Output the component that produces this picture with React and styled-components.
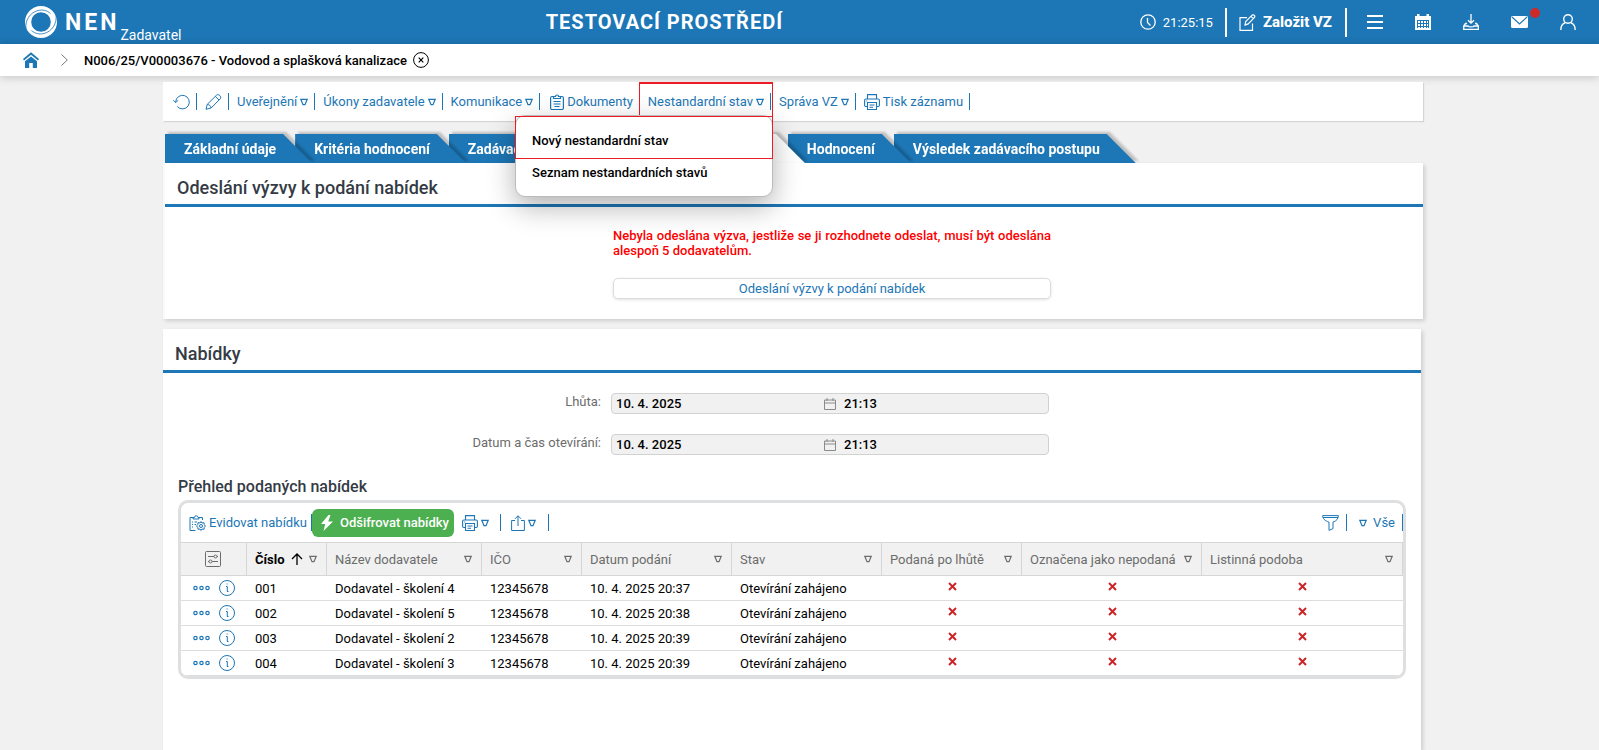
import React from 'react';
import styled, { createGlobalStyle } from 'styled-components';

const GlobalStyle = createGlobalStyle`
  * {
    box-sizing: border-box;
  }

  body {
    margin: 0;
    background: #f1f1f1;
    color: #000;
    font-family: Roboto, "Liberation Sans", sans-serif;
    font-size: 13px;
    line-height: 15px;
  }

  button, input {
    font: inherit;
    color: inherit;
    padding: 0;
    border: 0;
    background: none;
  }

  button {
    cursor: pointer;
  }

  a {
    color: inherit;
    text-decoration: none;
  }

  svg {
    display: block;
    flex: none;
  }
`;

const blue = '#1d76b5';

const Page = styled.div`
  display: flex;
  flex-direction: column;
  min-height: 100vh;
`;

const TopBar = styled.header`
  display: grid;
  grid-template-columns: 25fr auto 38fr;
  align-items: center;
  height: 44px;
  padding: 0 23px 0 24px;
  background: ${blue};
  color: #fff;
`;

const Brand = styled.a`
  display: flex;
  align-items: center;
`;

const BrandName = styled.span`
  margin: 0 1px 0 7px;
  font-size: 23px;
  font-weight: 700;
  letter-spacing: 3px;
`;

const BrandRole = styled.span`
  align-self: flex-end;
  padding-top: 26px;
  font-size: 14px;
`;

const EnvTitle = styled.div`
  font-size: 20px;
  font-weight: 700;
  letter-spacing: 1px;
`;

const TopActions = styled.nav`
  display: flex;
  align-items: center;
  justify-content: flex-end;
`;

const Clock = styled.span`
  display: flex;
  align-items: center;
  gap: 7px;
  padding-right: 12px;
`;

const CreateButton = styled.button`
  display: flex;
  align-items: center;
  gap: 7px;
  height: 29px;
  padding: 0 13px 0 12px;
  border: solid #fff;
  border-width: 0 2px;
  font-size: 15px;
  font-weight: 800;
`;

const IconButton = styled.button`
  position: relative;
  display: flex;
  color: ${(props) => props.$color || 'inherit'};
`;

const TopIcons = styled.div`
  display: flex;
  gap: 32px;
  padding-left: 20px;
`;

const Badge = styled.span`
  position: absolute;
  top: -6px;
  right: -12px;
  width: 10px;
  height: 10px;
  border-radius: 50%;
  background: #cf2a2a;
`;

const Crumbs = styled.nav`
  position: relative;
  display: flex;
  align-items: center;
  height: 32px;
  padding: 0 23px;
  background: #fff;
  box-shadow: 0 1px 10px rgba(0, 0, 0, 0.2);
  font-weight: 500;
`;

const CrumbArrow = styled.span`
  padding: 0 16px 0 22px;
  color: #777;
`;

const CrumbText = styled.a`
  margin-right: 6px;
`;

const Main = styled.main`
  display: flex;
  flex: 1;
  flex-direction: column;
  width: 100%;
  max-width: 1273px;
  margin: 0 auto;
  padding: 6px 13px 0 0;
`;

const Toolbar = styled.div`
  position: relative;
  display: flex;
  align-items: center;
  height: 39px;
  padding-left: 8px;
  background: #fff;
  box-shadow: 1px 1px 1px #d4d4d4;
  color: ${blue};
`;

const ToolItem = styled.div`
  position: relative;
  display: flex;
  align-items: center;
  height: 17px;
  padding: 0 ${(props) => props.$right || 6}px 0 ${(props) => (props.$left === undefined ? 8 : props.$left)}px;
  border-right: 1px solid ${blue};
`;

const ToolButton = styled.button`
  display: flex;
  align-items: center;
  gap: 3px;
  white-space: nowrap;
`;

/* red frame round the opened menu button */
const OpenFrame = styled.span`
  position: absolute;
  inset: -11px -3px -6px -1px;
  border: solid #ed1c24;
  border-width: 2px 1px 0;
  pointer-events: none;
`;

const Menu = styled.div`
  position: absolute;
  z-index: 20;
  top: 22px;
  right: -3px;
  display: flex;
  flex-direction: column;
  width: 258px;
  height: 82px;
  border: 1px solid #bbb;
  border-radius: 10px;
  background: #fff;
  box-shadow: 0 10px 28px rgba(0, 0, 0, 0.3);
  color: #000;
`;

const MenuItem = styled.button`
  height: 32px;
  padding-left: 16px;
  font-weight: 500;
  text-align: left;
`;

const MenuItemMarked = styled(MenuItem)`
  height: 43px;
  margin: 0 -1px -3px;
  padding: 6px 0 0 17px;
  outline: 1px solid #ed1c24;
  outline-offset: -1px;
`;

const Tabs = styled.div`
  display: flex;
  padding: 13px 0 0 2px;
`;

const TabShade = styled.div`
  position: relative;
  z-index: ${(props) => props.$level};
  height: 29px;
  margin-right: -17px;
  filter: drop-shadow(3px -2px 1px rgba(0, 0, 0, 0.2));
`;

const Tab = styled.button`
  min-width: ${(props) => props.$width || 0}px;
  height: 29px;
  padding: 1px 36px 0 19px;
  background: ${(props) => (props.$active ? '#fff' : blue)};
  color: #fff;
  clip-path: polygon(0 0, calc(100% - 29px) 0, 100% 100%, 0 100%);
  font-size: 14px;
  font-weight: 700;
  text-align: left;
  white-space: nowrap;
`;

const Panel = styled.section`
  position: relative;
  z-index: 10;
  margin-bottom: 10px;
  border-left: 2px solid #fafafa;
  background: #fff;
  box-shadow: 2px 2px 4px rgba(0, 0, 0, 0.15);
`;

const OffersPanel = styled(Panel)`
  flex: 1;
  margin: 0 2px 0 0;
  border-left: 0;
`;

const PanelTitle = styled.h2`
  margin: 0;
  padding: 16px 12px 7px;
  border-bottom: 3px solid ${blue};
  color: #343b45;
  font-size: 18px;
  font-weight: 500;
  line-height: 18px;
`;

const Notice = styled.div`
  width: 438px;
  margin-left: 448px;
  padding: 21px 0 20px;
`;

const Warning = styled.p`
  margin: 0 0 20px;
  color: #f00;
  font-weight: 500;
  text-align: justify;
`;

const SendButton = styled.button`
  display: block;
  width: 100%;
  height: 21px;
  border: 1px solid #dcdcdc;
  border-radius: 5px;
  box-shadow: 0 1px 3px rgba(0, 0, 0, 0.12);
  color: ${blue};
`;

const Fields = styled.div`
  display: grid;
  gap: 20px;
  padding: 20px 0;
`;

const Field = styled.div`
  display: grid;
  grid-template-columns: 438px 438px;
  gap: 10px;

  label {
    color: #6c6c6c;
    text-align: right;
    line-height: 17px;
  }
`;

const DateBox = styled.div`
  display: flex;
  align-items: center;
  height: 21px;
  padding: 0 4px;
  border: 1px solid #d2d2d2;
  border-radius: 4px;
  background: #f1f1f1;
  color: #8a8a8a;

  input {
    width: 208px;
    color: #000;
    font-weight: 500;
    outline: 0;
  }

  input:last-child {
    margin-left: 8px;
    width: 190px;
  }
`;

const GridTitle = styled.h3`
  margin: 0;
  padding: 3px 0 5px 15px;
  color: #343b45;
  font-size: 16px;
  font-weight: 500;
  line-height: 17px;
`;

const Grid = styled.div`
  margin: 0 15px;
  border: 3px solid #dedfe0;
  border-radius: 10px;
  overflow: hidden;
`;

const GridBar = styled.div`
  display: flex;
  align-items: center;
  justify-content: space-between;
  height: 39px;
  color: ${blue};
`;

const GridTools = styled.div`
  display: flex;
  align-items: center;
`;

const DecryptButton = styled.button`
  display: flex;
  align-items: center;
  gap: 5px;
  height: 28px;
  padding: 0 5px 0 7px;
  border-radius: 6px;
  background: #4caf50;
  color: #fff;
  font-weight: 500;
`;

const Table = styled.table`
  width: 100%;
  border-collapse: separate;
  border-spacing: 0;
  table-layout: fixed;

  th {
    height: 34px;
    padding: 0 9px 0 8px;
    border: solid #d6d6d6;
    border-width: 1px 1px 1px 0;
    background: #f1f1f1;
    color: #6c6c6c;
    font-weight: 400;
    text-align: left;
    white-space: nowrap;
  }

  td {
    height: 25px;
    padding: 0 8px;
    border-bottom: 1px solid #dedede;
    white-space: nowrap;
  }
`;

const HeadCell = styled.div`
  display: flex;
  align-items: center;
  justify-content: ${(props) => (props.$center ? 'center' : 'space-between')};
`;

const Sorted = styled.span`
  display: flex;
  align-items: center;
  gap: 6px;
  color: #000;
  font-weight: 700;
`;

const RowTools = styled.div`
  display: flex;
  align-items: center;
  gap: 9px;
  padding-left: 4px;
  color: ${blue};
`;

const Cross = styled.div`
  display: flex;
  justify-content: center;
  padding-bottom: 3px;
  color: #cb2528;
`;

const Svg = ({ w = 16, h = w, children, ...rest }) => (
  <svg
    width={w}
    height={h}
    viewBox={`0 0 ${w} ${h}`}
    fill='none'
    stroke='currentColor'
    aria-hidden='true'
    {...rest}
  >
    {children}
  </svg>
);

const Caret = () => (
  <Svg w={8} strokeWidth='1.2'>
    <path d='M.8 1.3h6.4L5 6.7H3z' />
  </Svg>
);

const LogoIcon = () => (
  <Svg w={34}>
    <circle cx='17' cy='17' r='12.9' stroke='#fff' strokeWidth='6.2' />
    <path stroke={blue} strokeWidth='.8' d='M2 24C.8 15.500 6 7.500 14 5.500c4.500-1 9-.2 12.500 3M32 10C33.200 18.500 28 26.500 20 28.500c-4.500 1-9 .2-12.500-3' />
  </Svg>
);

const PrintIcon = () => (
  <Svg w={16} strokeWidth='1.1'>
    <path d='M3.500 5V.6h9V5M3.500 12.500H1.800a1.200 1.200 0 0 1-1.200-1.200V6.200C.6 5.500 1.100 5 1.800 5h12.400c.7 0 1.200.5 1.200 1.200v5.100c0 .7-.5 1.200-1.200 1.200h-1.700M3.500 8.500h9v7h-9zM5.500 11h5M5.500 13.200h3.500M2.300 7h1' />
  </Svg>
);

const ClipboardIcon = () => (
  <Svg w={14} h={16} strokeWidth='1.2'>
    <path d='M3.500 2.500H2A1.400 1.400 0 0 0 .6 3.900v10.200a1.400 1.400 0 0 0 1.400 1.400h10a1.400 1.400 0 0 0 1.400-1.400V3.900A1.400 1.400 0 0 0 12 2.500h-1.500M3.500 4.500v-2h2a1.500 1.500 0 0 1 3 0h2v2zM3.500 7.500h7M3.500 10h7M4.500 12.500h5' />
  </Svg>
);

const CrossIcon = () => (
  <Svg w={9} strokeWidth='2'>
    <path d='M1 1l7 7M8 1L1 8' />
  </Svg>
);

const columns = [
  { name: 'Název dodavatele', width: 155 },
  { name: 'IČO', width: 100 },
  { name: 'Datum podání', width: 150 },
  { name: 'Stav', width: 150 },
  { name: 'Podaná po lhůtě', width: 140 },
  { name: 'Označena jako nepodaná', width: 180 },
  { name: 'Listinná podoba' },
];

const rows = [
  ['001', 'Dodavatel - školení 4', '12345678', '10. 4. 2025 20:37'],
  ['002', 'Dodavatel - školení 5', '12345678', '10. 4. 2025 20:38'],
  ['003', 'Dodavatel - školení 2', '12345678', '10. 4. 2025 20:39'],
  ['004', 'Dodavatel - školení 3', '12345678', '10. 4. 2025 20:39'],
];

const tabs = [
  { name: 'Základní údaje' },
  { name: 'Kritéria hodnocení' },
  { name: 'Zadávací', width: 160 },
  { name: '', width: 213, active: true },
  { name: 'Hodnocení' },
  { name: 'Výsledek zadávacího postupu' },
];

const Header = () => (
  <TopBar>
    <Brand href='#'>
      <LogoIcon />
      <BrandName>NEN</BrandName>
      <BrandRole>Zadavatel</BrandRole>
    </Brand>
    <EnvTitle>TESTOVACÍ PROSTŘEDÍ</EnvTitle>
    <TopActions>
      <Clock>
        <Svg strokeWidth='1.3'>
          <circle cx='8' cy='8' r='7.200' />
          <path d='M7.500 4v4.500l3 3' />
        </Svg>
        21:25:15
      </Clock>
      <CreateButton>
        <Svg w={17} strokeWidth='1.2'>
          <path d='M8 3.600H1v12.800h12.500V9.500M6 11l.7-3.500L13.300.9c1.500-.5 2.800.8 2.400 2.300L9.200 9.900zM12 2.300l2.400 2.400' />
        </Svg>
        Založit VZ
      </CreateButton>
      <TopIcons>
        <IconButton aria-label='Menu'>
          <Svg strokeWidth='2'>
            <path d='M0 2h16M0 8h16M0 14h16' />
          </Svg>
        </IconButton>
        <IconButton aria-label='Kalendář'>
          <Svg stroke='none' fill='#fff'>
            <path d='M0 2h2V0h2.500v2h7V0H14v2h2v14H0z' />
            <path stroke={blue} strokeWidth='1' fill='none' d='M2 6.500h12M2 9.500h12M2 12.500h12M2.500 6v8M5.500 6v8M8.500 6v8M11.500 6v8M13.500 6v8' />
          </Svg>
        </IconButton>
        <IconButton aria-label='Stažené'>
          <Svg strokeWidth='1.3'>
            <path d='M8 0v9M5 6.200L8 9.200l3-3M4 9.500H2.500L.7 12v3.300h14.600V12l-1.800-2.500H12M.7 12H5c.5 1.200 5.500 1.200 6 0h4.300' />
          </Svg>
        </IconButton>
        <IconButton aria-label='Zprávy'>
          <Svg w={17} h={16} stroke='none'>
            <rect y='2' width='17' height='12' rx='1.500' fill='#fff' />
            <path stroke={blue} strokeWidth='1.100' d='M1 3l7.500 7L16 3' />
          </Svg>
          <Badge />
        </IconButton>
        <IconButton aria-label='Uživatel'>
          <Svg strokeWidth='1.400'>
            <circle cx='8' cy='5' r='4.300' />
            <path d='M.8 16c0-4 2.200-6.500 4.700-7.300M15.200 16c0-4-2.200-6.500-4.700-7.300' />
          </Svg>
        </IconButton>
      </TopIcons>
    </TopActions>
  </TopBar>
);

const Breadcrumbs = () => (
  <Crumbs>
    <IconButton aria-label='Domů' $color={blue}>
      <Svg stroke='none' fill='currentColor'>
        <path d='M8 .3L16 7l-1 1.500L8 2.800 1 8.500 0 7z' />
        <path d='M8 4.500l6 4.800V16H9.800v-5H6.200v5H2V9.300z' />
      </Svg>
    </IconButton>
    <CrumbArrow>
      <Svg w={7} h={12}>
        <path d='M.5.500L6.300 6 .5 11.500' />
      </Svg>
    </CrumbArrow>
    <CrumbText href='#'>N006/25/V00003676 - Vodovod a splašková kanalizace</CrumbText>
    <IconButton aria-label='Zavřít'>
      <Svg>
        <circle cx='8' cy='8' r='7.400' />
        <path strokeWidth='1.200' d='M5.700 5.700l4.600 4.600M10.300 5.700l-4.600 4.600' />
      </Svg>
    </IconButton>
  </Crumbs>
);

const RecordToolbar = () => (
  <Toolbar>
    <ToolItem $left={2}>
      <IconButton aria-label='Obnovit'>
        <Svg w={17} h={16}>
          <path d='M2.700 8a6.800 6.800 0 1 1 1.600 4.500M.4 6.300L2.700 8.700 5 6.300' />
        </Svg>
      </IconButton>
    </ToolItem>
    <ToolItem>
      <IconButton aria-label='Upravit'>
        <Svg w={17} h={16}>
          <path d='M1 15.300l1.300-5L11.700 1c2-1.300 5 1.500 3.700 3.700l-9.300 9.300zM10.300 2.300l3.800 3.800M2.300 10.300c2 .2 3.500 1.700 3.800 3.700' />
        </Svg>
      </IconButton>
    </ToolItem>
    <ToolItem><ToolButton>Uveřejnění <Caret /></ToolButton></ToolItem>
    <ToolItem><ToolButton>Úkony zadavatele <Caret /></ToolButton></ToolItem>
    <ToolItem><ToolButton>Komunikace <Caret /></ToolButton></ToolItem>
    <ToolItem $left={10}><ToolButton><ClipboardIcon /> Dokumenty</ToolButton></ToolItem>
    <ToolItem>
      <ToolButton aria-expanded='true'>Nestandardní stav <Caret /></ToolButton>
      <OpenFrame />
      <Menu>
        <MenuItemMarked>Nový nestandardní stav</MenuItemMarked>
        <MenuItem>Seznam nestandardních stavů</MenuItem>
      </Menu>
    </ToolItem>
    <ToolItem><ToolButton>Správa VZ <Caret /></ToolButton></ToolItem>
    <ToolItem><ToolButton><PrintIcon /> Tisk záznamu</ToolButton></ToolItem>
  </Toolbar>
);

const OffersGrid = () => (
  <Grid>
    <GridBar>
      <GridTools>
        <ToolItem $right={4}>
          <ToolButton>
            <Svg w={17} h={16}>
              <path d='M4 2.500H1v13h5.500M10 2.500h3.500v2.500M4 4V2.500h1.500a1.700 1.700 0 0 1 3.500 0H10V4zM3 7h1M5.500 7H8M3 9.500h1M3 12h1M5.500 9.500h1.500' />
              <path d='M12 6.500l1 1.500 2-.3.300 2 1.200 1.300-1.200 1.300-.3 2-2-.3-1 1.500-1-1.500-2 .3-.3-2L7.500 11l1.200-1.300.3-2 2 .3z' />
              <circle cx='12' cy='11' r='1.500' />
            </Svg>
            Evidovat nabídku
          </ToolButton>
        </ToolItem>
        <DecryptButton>
          <Svg w={16} h={16} stroke='none' fill='#fff'>
            <path d='M9.500 0L2 9h4.200L4.500 16 14 6.500H9.200L11.500 0z' />
          </Svg>
          Odšifrovat nabídky
        </DecryptButton>
        <ToolItem $right={11}>
          <ToolButton aria-label='Tisk'><PrintIcon /><Caret /></ToolButton>
        </ToolItem>
        <ToolItem $left={10} $right={12}>
          <ToolButton aria-label='Export'>
            <Svg w={14} h={16}>
              <path d='M4 5.500H.6v10h12.800v-10H10M7 11V.8M4 3.800l3-3 3 3' />
            </Svg>
            <Caret />
          </ToolButton>
        </ToolItem>
      </GridTools>
      <GridTools>
        <ToolItem $right={7}>
          <IconButton aria-label='Filtr'>
            <Svg w={17} h={16}>
              <path d='M.6.600h15.800c0 3-1.900 5.400-5.400 6.500v6.500L7 15.400V7.100C3 6 .6 3.600.6.600zM1 2.500h15' />
            </Svg>
          </IconButton>
        </ToolItem>
        <ToolItem $left={12} $right={7}>
          <ToolButton><Caret />&nbsp;Vše</ToolButton>
        </ToolItem>
      </GridTools>
    </GridBar>
    <Table>
      <colgroup>
        <col width='66' />
        <col width='80' />
        {columns.map((column) => (
          <col key={column.name} width={column.width} />
        ))}
      </colgroup>
      <thead>
        <tr>
          <th>
            <HeadCell $center>
              <Svg>
                <rect x='.5' y='.5' width='15' height='15' rx='1' />
                <path d='M3 5.500h6M12 5.500h1M3 10.500h1M7 10.500h6' />
                <circle cx='10.500' cy='5.500' r='1.500' />
                <circle cx='5.500' cy='10.500' r='1.500' />
              </Svg>
            </HeadCell>
          </th>
          <th>
            <HeadCell>
              <Sorted>
                Číslo
                <Svg w={12} h={12} strokeWidth='1.300'>
                  <path d='M6 12V1M1 6l5-5 5 5' />
                </Svg>
              </Sorted>
              <Caret />
            </HeadCell>
          </th>
          {columns.map((column) => (
            <th key={column.name}>
              <HeadCell>
                {column.name}
                <Caret />
              </HeadCell>
            </th>
          ))}
        </tr>
      </thead>
      <tbody>
        {rows.map((row) => (
          <tr key={row[0]}>
            <td>
              <RowTools>
                <IconButton aria-label='Akce'>
                  <Svg w={17} h={6} strokeWidth='1.200'>
                    <circle cx='2.500' cy='3' r='1.700' />
                    <circle cx='8.500' cy='3' r='1.700' />
                    <circle cx='14.500' cy='3' r='1.700' />
                  </Svg>
                </IconButton>
                <IconButton aria-label='Detail'>
                  <Svg>
                    <circle cx='8' cy='8' r='7.500' />
                    <path d='M7 6.500h1.300v5M8 11.500h1.500M7.600 4h1' />
                  </Svg>
                </IconButton>
              </RowTools>
            </td>
            {row.map((value) => (
              <td key={value}>{value}</td>
            ))}
            <td>Otevírání zahájeno</td>
            <td><Cross><CrossIcon /></Cross></td>
            <td><Cross><CrossIcon /></Cross></td>
            <td><Cross><CrossIcon /></Cross></td>
          </tr>
        ))}
      </tbody>
    </Table>
  </Grid>
);

const DateField = ({ id, label }) => (
  <Field>
    <label htmlFor={id}>{label}</label>
    <DateBox>
      <input id={id} defaultValue='10. 4. 2025' readOnly />
      <Svg w={12} h={12}>
        <path d='M.5 2h11v9.500H.5zM.5 5h11M3 0v3M9 0v3' />
      </Svg>
      <input aria-label={label} defaultValue='21:13' readOnly />
    </DateBox>
  </Field>
);

const App = () => {
  return (
    <Page>
      <GlobalStyle />
      <Header />
      <Breadcrumbs />
      <Main>
        <RecordToolbar />
        <Tabs>
          {tabs.map((tab, index) => (
            <TabShade key={index} $level={tabs.length - index}>
              <Tab $active={tab.active} $width={tab.width} aria-label={tab.name || 'Nabídky'}>
                {tab.name}
              </Tab>
            </TabShade>
          ))}
        </Tabs>
        <Panel>
          <PanelTitle>Odeslání výzvy k podání nabídek</PanelTitle>
          <Notice>
            <Warning>
              Nebyla odeslána výzva, jestliže se ji rozhodnete odeslat, musí být odeslána alespoň 5 dodavatelům.
            </Warning>
            <SendButton>Odeslání výzvy k podání nabídek</SendButton>
          </Notice>
        </Panel>
        <OffersPanel>
          <PanelTitle>Nabídky</PanelTitle>
          <Fields>
            <DateField id='deadline' label='Lhůta:' />
            <DateField id='opening' label='Datum a čas otevírání:' />
          </Fields>
          <GridTitle>Přehled podaných nabídek</GridTitle>
          <OffersGrid />
        </OffersPanel>
      </Main>
    </Page>
  );
};

export default App;
